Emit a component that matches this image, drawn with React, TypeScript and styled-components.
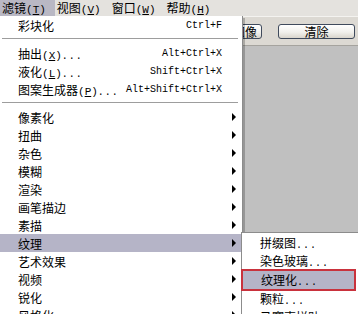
import React from 'react'
import styled, { createGlobalStyle } from 'styled-components'

const GlobalStyle = createGlobalStyle`
  html, body {
    margin: 0;
    padding: 0;
    background: #c0c0c0;
  }
`

const Screen = styled.div`
  position: relative;
  width: 358px;
  height: 314px;
  overflow: hidden;
  display: flex;
  flex-direction: column;
  background: #c0c0c0;
  font-family: "Noto Sans CJK SC", "Liberation Sans", sans-serif;
  font-size: 12px;
  color: #000;
`

const MenuBar = styled.div`
  display: flex;
  height: 16px;
  align-items: center;
  background: #e4e2de;
`

const MenuTitle = styled.div<{ $open?: boolean }>`
  height: 16px;
  line-height: 16px;
  padding: 0 9px 0 2px;
  background: ${(p) => (p.$open ? '#b9b8c4' : 'transparent')};
  white-space: nowrap;
`

const Key = styled.span`
  font-family: "Liberation Mono", monospace;
  font-size: 11px;
  text-decoration: underline;
`

const Paren = styled.span`
  font-family: "Liberation Mono", monospace;
  font-size: 11px;
`

const Toolbar = styled.div`
  height: 28px;
  display: flex;
  align-items: center;
  justify-content: flex-end;
  gap: 16px;
  padding-right: 3px;
  background: #dcd9d3;
  border-top: 1px solid #f4f3f0;
  border-bottom: 1px solid #a5a39e;
`

const Button = styled.div<{ $width: number }>`
  width: ${(p) => p.$width}px;
  height: 13px;
  line-height: 13px;
  text-align: center;
  border: 1px solid #3f4a5c;
  border-radius: 3px;
  background: linear-gradient(#ffffff, #f1f0ec 55%, #d9d5cc);
  font-size: 12px;
  white-space: nowrap;
  overflow: hidden;
`

const Canvas = styled.div`
  flex: 1;
  background: #c0c0c0;
`

const Dropdown = styled.div`
  position: absolute;
  left: 0;
  top: 16px;
  width: 242px;
  background: #ffffff;
  border-right: 1px solid #8c8c8c;
  box-shadow: 2px 2px 0 rgba(0, 0, 0, 0.22);
`

const Item = styled.div<{ $active?: boolean }>`
  position: relative;
  display: flex;
  align-items: center;
  height: 18px;
  padding: 0 20px 0 18px;
  background: ${(p) => (p.$active ? '#b5b4c7' : 'transparent')};
  white-space: nowrap;
`

const Shortcut = styled.span`
  margin-left: auto;
  font-family: "Liberation Mono", monospace;
  font-size: 10px;
`

const Dots = styled.span`
  font-family: "Liberation Mono", monospace;
  font-size: 10px;
  letter-spacing: 1px;
`

const Arrow = styled.span`
  position: absolute;
  right: 6px;
  top: 5px;
  width: 0;
  height: 0;
  border-left: 4px solid #000;
  border-top: 4px solid transparent;
  border-bottom: 4px solid transparent;
`

const Separator = styled.div`
  height: 1px;
  margin: 4px 4px 4px 2px;
  background: #9d9d9d;
  border-bottom: 1px solid #ffffff;
`

const Submenu = styled.div`
  position: absolute;
  left: 241px;
  top: -2px;
  width: 130px;
  padding-top: 1px;
  background: #ffffff;
  border: 1px solid #8c8c8c;
`

const SubItem = styled.div<{ $active?: boolean }>`
  height: 18px;
  line-height: 18px;
  padding-left: 18px;
  margin: ${(p) => (p.$active ? '1px 0 1px 1px' : '0')};
  width: ${(p) => (p.$active ? '93px' : 'auto')};
  background: ${(p) => (p.$active ? '#b5b4c7' : 'transparent')};
  outline: ${(p) => (p.$active ? '2px solid #c9323d' : 'none')};
  white-space: nowrap;
`

type Entry = { label: string; key?: string; dots?: boolean; shortcut?: string }

const titles: { label: string; key: string }[] = [
  { label: '滤镜', key: 'T' },
  { label: '视图', key: 'V' },
  { label: '窗口', key: 'W' },
  { label: '帮助', key: 'H' },
]

const tools: Entry[] = [
  { label: '抽出', key: 'X', dots: true, shortcut: 'Alt+Ctrl+X' },
  { label: '液化', key: 'L', dots: true, shortcut: 'Shift+Ctrl+X' },
  { label: '图案生成器', key: 'P', dots: true, shortcut: 'Alt+Shift+Ctrl+X' },
]

const groups = ['像素化', '扭曲', '杂色', '模糊', '渲染', '画笔描边', '素描', '纹理', '艺术效果', '视频', '锐化', '风格化']

const textures = ['拼缀图', '染色玻璃', '纹理化', '颗粒', '马赛克拼贴']

const Label = ({ label, keyChar, dots }: { label: string; keyChar?: string; dots?: boolean }) => (
  <span>
    {label}
    {keyChar && (
      <>
        <Paren>(</Paren>
        <Key>{keyChar}</Key>
        <Paren>)</Paren>
      </>
    )}
    {dots && <Dots>...</Dots>}
  </span>
)

const App = () => (
  <Screen>
    <GlobalStyle />
    <MenuBar>
      {titles.map((t, i) => (
        <MenuTitle key={t.key} $open={i === 0}>
          {t.label}
          <Paren>(</Paren>
          <Key>{t.key}</Key>
          <Paren>)</Paren>
        </MenuTitle>
      ))}
    </MenuBar>
    <Toolbar>
      <Button $width={56}>载入图像</Button>
      <Button $width={75}>清除</Button>
    </Toolbar>
    <Canvas />

    <Dropdown>
      <Item>
        彩块化
        <Shortcut>Ctrl+F</Shortcut>
      </Item>
      <Separator />
      {tools.map((t) => (
        <Item key={t.label}>
          <Label label={t.label} keyChar={t.key} dots={t.dots} />
          <Shortcut>{t.shortcut}</Shortcut>
        </Item>
      ))}
      <Separator />
      {groups.map((g) => (
        <Item key={g} $active={g === '纹理'}>
          {g}
          <Arrow />
          {g === '纹理' && (
            <Submenu>
              {textures.map((s) => (
                <SubItem key={s} $active={s === '纹理化'}>
                  <Label label={s} dots={s !== '马赛克拼贴'} />
                </SubItem>
              ))}
            </Submenu>
          )}
        </Item>
      ))}
    </Dropdown>
  </Screen>
)

export default App
